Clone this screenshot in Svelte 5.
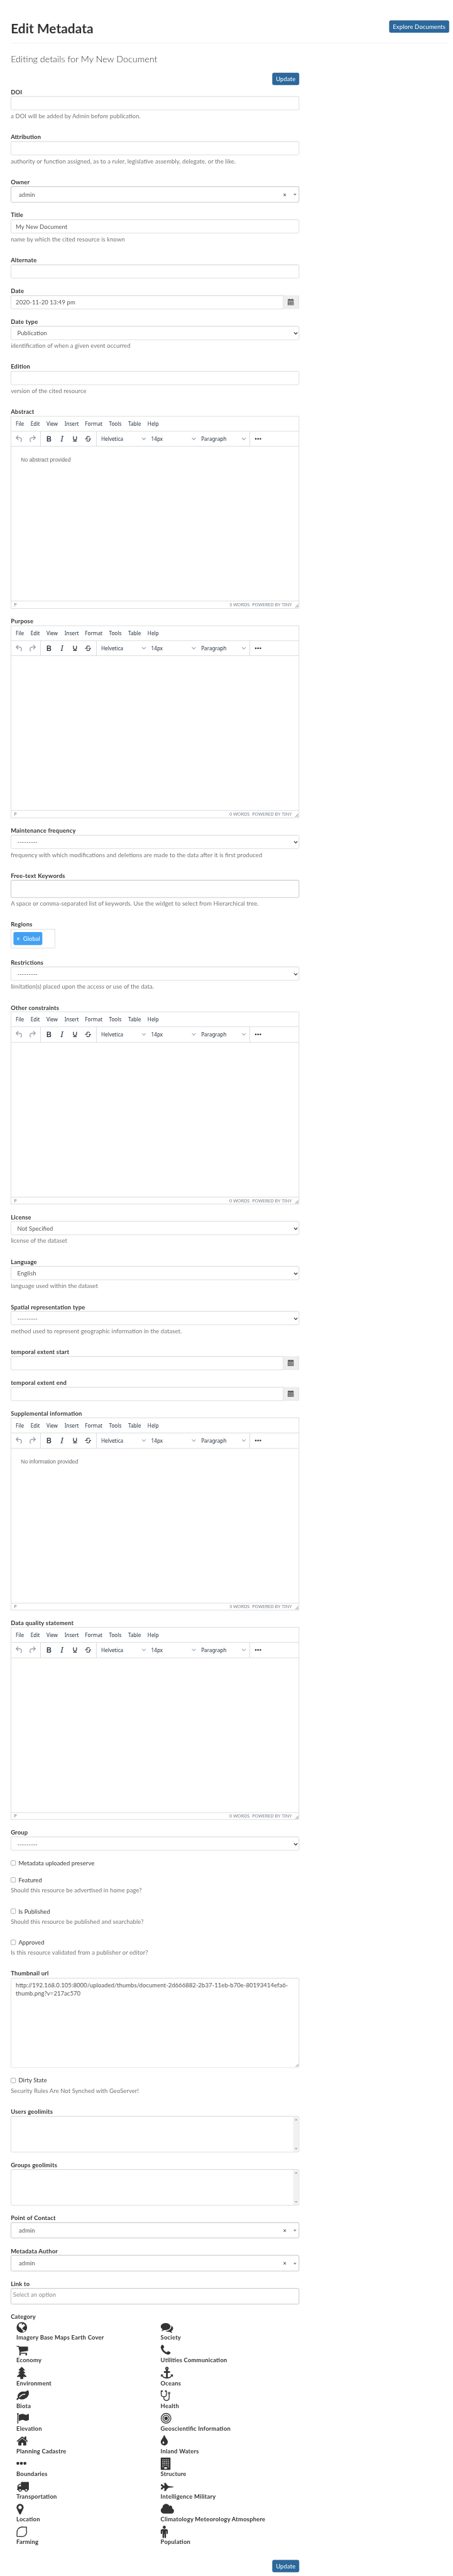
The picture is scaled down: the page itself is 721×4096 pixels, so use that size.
<script>
  const menus = [
    ['File', 38.8], ['Edit', 41.4], ['View', 47], ['Insert', 53],
    ['Format', 62.3], ['Tools', 50], ['Table', 50.4], ['Help', 40]
  ];

  const fields = [
    { label: 'DOI', kind: 'text', help: 'a DOI will be added by Admin before publication.' },
    { label: 'Attribution', kind: 'text', help: 'authority or function assigned, as to a ruler, legislative assembly, delegate, or the like.' },
    { label: 'Owner', kind: 'picker', value: 'admin' },
    { label: 'Title', kind: 'text', value: 'My New Document', help: 'name by which the cited resource is known' },
    { label: 'Alternate', kind: 'text' },
    { label: 'Date', kind: 'date', value: '2020-11-20 13:49 pm' },
    { label: 'Date type', kind: 'select', value: 'Publication', help: 'identification of when a given event occurred' },
    { label: 'Edition', kind: 'text', help: 'version of the cited resource' },
    { label: 'Abstract', kind: 'editor', value: 'No abstract provided', words: 3 },
    { label: 'Purpose', kind: 'editor', words: 0 },
    { label: 'Maintenance frequency', kind: 'select', value: '---------', help: 'frequency with which modifications and deletions are made to the data after it is first produced' },
    { label: 'Free-text Keywords', kind: 'keywords', help: 'A space or comma-separated list of keywords. Use the widget to select from Hierarchical tree.' },
    { label: 'Regions', kind: 'regions', value: 'Global' },
    { label: 'Restrictions', kind: 'select', value: '---------', help: 'limitation(s) placed upon the access or use of the data.' },
    { label: 'Other constraints', kind: 'editor', words: 0 },
    { label: 'License', kind: 'select', value: 'Not Specified', help: 'license of the dataset' },
    { label: 'Language', kind: 'select', value: 'English', help: 'language used within the dataset' },
    { label: 'Spatial representation type', kind: 'select', value: '---------', help: 'method used to represent geographic information in the dataset.' },
    { label: 'temporal extent start', kind: 'date' },
    { label: 'temporal extent end', kind: 'date' },
    { label: 'Supplemental information', kind: 'editor', value: 'No information provided', words: 3 },
    { label: 'Data quality statement', kind: 'editor', words: 0 },
    { label: 'Group', kind: 'select', value: '---------' },
    { label: 'Metadata uploaded preserve', kind: 'check' },
    { label: 'Featured', kind: 'check', help: 'Should this resource be advertised in home page?' },
    { label: 'Is Published', kind: 'check', help: 'Should this resource be published and searchable?' },
    { label: 'Approved', kind: 'check', help: 'Is this resource validated from a publisher or editor?' },
    { label: 'Thumbnail url', kind: 'area', value: 'http://192.168.0.105:8000/uploaded/thumbs/document-2d666882-2b37-11eb-b70e-80193414efa6-thumb.png?v=217ac570' },
    { label: 'Dirty State', kind: 'check', help: 'Security Rules Are Not Synched with GeoServer!' },
    { label: 'Users geolimits', kind: 'list' },
    { label: 'Groups geolimits', kind: 'list' },
    { label: 'Point of Contact', kind: 'picker', value: 'admin' },
    { label: 'Metadata Author', kind: 'picker', value: 'admin' },
    { label: 'Link to', kind: 'link', value: 'Select an option' }
  ];

  const styleIcons = [
    'M7.8 19c-.3 0-.5 0-.6-.2l-.2-.5V5.7c0-.2 0-.4.2-.5l.6-.2h5c1.5 0 2.7.3 3.5 1 .7.6 1.1 1.4 1.1 2.5a3 3 0 01-.6 1.9c-.4.6-1 1-1.6 1.2.4.1.9.3 1.3.6s.8.7 1 1.2c.4.4.5 1 .5 1.6 0 1.3-.4 2.3-1.3 3-.8.7-2.1 1-3.8 1H7.8zm5-8.3c.6 0 1.2-.1 1.6-.5.4-.3.6-.7.6-1.3 0-1.1-.8-1.7-2.3-1.7H9.3v3.5h3.4zm.5 6c.7 0 1.3-.1 1.7-.4.4-.4.6-.9.6-1.5s-.2-1-.7-1.4c-.4-.3-1-.4-2-.4H9.4v3.8h4z',
    'M16.7 4.7l-.1.9h-.3c-.6 0-1 0-1.4.3-.3.3-.4.6-.5 1.1l-2.1 9.8v.6c0 .5.4.8 1.4.8h.2l-.2.8H8l.2-.8h.2c1.1 0 1.8-.5 2-1.5l2-9.8.1-.5c0-.6-.4-.8-1.4-.8h-.3l.2-.9h5.8z',
    'M16 5c.6 0 1 .4 1 1v5.5a4 4 0 01-.4 1.8l-1 1.4a5.3 5.3 0 01-5.5 1 5 5 0 01-1.6-1c-.5-.4-.8-.9-1.1-1.4a4 4 0 01-.4-1.8V6c0-.6.4-1 1-1s1 .4 1 1v5.5c0 .3 0 .6.2 1l.6.7a3.3 3.3 0 002.2.8 3.4 3.4 0 002.2-.8c.3-.2.4-.5.6-.8l.2-.9V6c0-.6.4-1 1-1zM8 17h8c.6 0 1 .4 1 1s-.4 1-1 1H8a1 1 0 010-2z',
    'M15.6 8.5c-.5-.7-1-1.1-1.3-1.3-.6-.4-1.3-.6-2-.6-2.7 0-2.8 1.7-2.8 2.1 0 1.6 1.8 2 3.2 2.3 4.4.9 4.6 2.8 4.6 3.9 0 1.4-.7 4.1-5 4.1A6.2 6.2 0 017 16.4l1.5-1.1c.4.6 1.6 2 3.7 2 1.6 0 2.5-.4 3-1.2.4-.8.3-2-.8-2.6-.7-.4-1.6-.7-2.9-1-1-.2-3.9-.8-3.9-3.6C7.6 6 10.3 5 12.4 5c2.9 0 4.2 1.6 4.7 2.4l-1.5 1.1zM5 11h14a1 1 0 010 2H5a1 1 0 010-2z'
  ];

  // Each icon: left edge and width on a 1792-unit grid, filled path, optional stroked path.
  const categories = [
    { name: 'Imagery Base Maps Earth Cover', x: 128, w: 1536, d: 'M896 128a768 768 0 1 1 0 1536a768 768 0 1 1 0-1536zM410 610L470 440L620 330L880 280L960 310L860 380L900 480L1010 500L1090 400L1220 420L1380 640L1290 720L1170 760L1120 880L1000 960L940 1060L990 1120L1060 1100L1110 1230L1280 1250L1390 1370L1230 1500L1040 1540L1000 1490L1060 1380L1050 1260L900 1180L800 1080L740 960L600 900L500 780z' },
    { name: 'Society', x: 0, w: 1792, d: 'M1408 768q0 139-94 257t-256.5 186.5-353.5 68.5q-86 0-176-16-124 88-278 128-36 9-86 16h-3q-11 0-20.5-8t-11.5-21q-1-3-1-6.5t.5-6.5 2-6l2.5-5 3.5-5.5 4-5 4.5-5 4-4.5q5-6 23-25t26-29.5 22.5-29 25-38.5 20.5-44q-124-72-195-177t-71-224q0-139 94-257t256.5-186.5 353.5-68.5 353.5 68.5 256.5 186.5 94 257zm384 256q0 120-71 224.5t-195 176.5q10 24 20.5 44t25 38.5 22.5 29 26 29.5 23 25q1 1 4 4.5t4.5 5 4 5 3.5 5.5l2.5 5 2 6 .5 6.5-1 6.5q-3 14-13 22t-22 7q-50-7-86-16-154-40-278-128-90 16-176 16-271 0-472-132 58 4 88 4 161 0 309-45t264-129q125-92 192-212t67-254q0-77-23-152 129 71 204 178t75 230z' },
    { name: 'Economy', x: 64, w: 1664, d: 'M704 1536q0 52-38 90t-90 38-90-38-38-90 38-90 90-38 90 38 38 90zm896 0q0 52-38 90t-90 38-90-38-38-90 38-90 90-38 90 38 38 90zm128-1088v512q0 24-16.5 42.5t-40.5 21.5l-1044 122q13 60 13 70 0 16-24 64h920q26 0 45 19t19 45-19 45-45 19h-1024q-26 0-45-19t-19-45q0-11 8-31.5t16-36 21.5-40 15.5-29.5l-177-823h-204q-26 0-45-19t-19-45 19-45 45-19h256q16 0 28.5 6.5t19.5 15.5 13 24.5 8 26 5.5 29.5 4.5 26h1201q26 0 45 19t19 45z' },
    { name: 'Utilities Communication', x: 192, w: 1408, d: 'M1600 1240q0 27-10 70.5t-21 68.5q-21 50-122 106-94 51-186 51-27 0-53-3.5t-57.5-12.5-47-14.5-55.5-20.5-49-18q-98-35-175-83-127-79-264-216t-216-264q-48-77-83-175-3-9-18-49t-20.5-55.5-14.5-47-12.5-57.5-3.5-53q0-92 51-186 56-101 106-122 25-11 68.5-21t70.5-10q14 0 21 3 18 6 53 76 11 19 30 54t35 63.5 31 53.5q3 4 17.5 25t21.5 35.5 7 28.5q0 20-28.5 50t-62 55-62 53-28.5 46q0 9 5 22.5t8.5 20.5 14 24 11.5 19q76 137 174 235t235 174q2 1 19 11.5t24 14 20.5 8.5 22.5 5q18 0 46-28.5t53-62 55-62 50-28.5q14 0 28.5 7t35.5 21.5 25 17.5q25 15 53.5 31t63.5 35 54 30q70 35 76 53 3 7 3 21z' },
    { name: 'Environment', x: 140, w: 1510, d: 'M895 30q26 0 45 19l384 384q19 19 19 45t-19 45-45 19h-190l285 301q19 19 19 45t-19 45-45 19h-190l430 429q19 19 19 45t-19 45-45 19h-420v238q0 26-19 45t-45 19h-290q-26 0-45-19t-19-45v-238h-420q-26 0-45-19t-19-45 19-45l430-429h-190q-26 0-45-19t-19-45 19-45l285-301h-190q-26 0-45-19t-19-45 19-45l384-384q19-19 45-19z' },
    { name: 'Oceans', x: 0, w: 1792, d: 'M896 0a256 256 0 0 1 128 476v164h256a64 64 0 0 1 64 64v128a64 64 0 0 1-64 64h-256v647q170-22 304-90t204-170l-110-110q-15-15-10-35 9-20 30-20h290q32 0 32 32v290q0 20-20 30-20 5-35-10l-80-80q-95 150-290 240t-443 92q-250-2-446-92t-287-240l-80 80q-15 15-35 10-20-10-20-30v-290q0-32 32-32h290q21 0 30 20 5 20-10 35l-110 110q70 102 204 170t304 90v-647h-256a64 64 0 0 1-64-64v-128a64 64 0 0 1 64-64h256v-164a256 256 0 0 1 128-476zM896 170a72 72 0 1 0 0 144a72 72 0 1 0 0-144z' },
    { name: 'Biota', x: 0, w: 1792, d: 'M1280 704q0-26-19-45t-45-19q-172 0-318 49.5t-259.5 134-235.5 219.5q-19 21-19 45 0 26 19 45t45 19q24 0 45-19 27-24 74-71t67-66q137-124 268.5-176t313.5-52q26 0 45-19t19-45zm512-198q0 95-20 193-46 224-184.5 383t-357.5 268q-214 108-438 108-148 0-286-47-15-5-88-42t-96-37q-16 0-39.5 32t-45 70-52.5 70-60 32q-43 0-63.5-17.5t-45.5-59.5q-2-4-6-11t-5.5-10-3-9.5-1.5-13.5q0-35 31-73.5t68-65.5 68-56 31-48q0-4-14-38t-16-44q-9-51-9-104 0-115 43.5-220t119-184.5 170.5-139 204-95.5q55-18 145-25.5t179.5-9 178.5-6 163.5-24 113.5-56.5l29.5-29.5 29.5-28 27-20 36.5-16 43.5-4.5q39 0 70.5 46t47.5 112 24 124 8 96z' },
    { name: 'Health', x: 192, w: 1408, d: 'M1408 350a176 176 0 1 1 0 352a176 176 0 1 1 0-352zM1408 462a64 64 0 1 0 0 128a64 64 0 1 0 0-128zM384 128a110 110 0 1 1 0 220a110 110 0 1 1 0-220zM896 128a110 110 0 1 1 0 220a110 110 0 1 1 0-220z', s: 'M400 240H256V700C256 1180 1024 1180 1024 700V240H880M640 1060V1240C640 1700 1408 1700 1408 1240V680' },
    { name: 'Elevation', x: 0, w: 1792, d: 'M320 256q0 72-64 110v1266q0 13-9.5 22.5t-22.5 9.5h-64q-13 0-22.5-9.5t-9.5-22.5v-1266q-64-38-64-110 0-53 37.5-90.5t90.5-37.5 90.5 37.5 37.5 90.5zm1472 64v763q0 25-12.5 38.5t-39.5 27.5q-215 116-369 116-61 0-123.5-22t-108.5-48-115.5-48-142.5-22q-192 0-464 146-17 9-33 9-26 0-45-19t-19-45v-742q0-32 31-55 21-14 79-43 236-120 421-120 107 0 200 29t219 88q38 19 88 19 54 0 117.5-21t110-47 88-47 54.5-21q26 0 45 19t19 45z' },
    { name: 'Geoscientific Information', x: 128, w: 1536, d: 'M896 640a256 256 0 1 1 0 512a256 256 0 1 1 0-512z', s: 'M896 448a448 448 0 1 1 0 896a448 448 0 1 1 0-896zM896 192a704 704 0 1 1 0 1408a704 704 0 1 1 0-1408z' },
    { name: 'Planning Cadastre', x: 64, w: 1664, d: 'M1472 992v480q0 26-19 45t-45 19h-384v-384h-256v384h-384q-26 0-45-19t-19-45v-480q0-1 .5-3t.5-3l575-474 575 474q1 2 1 6zm223-69l-62 74q-8 9-21 11h-3q-13 0-21-7l-692-577-692 577q-12 8-24 7-13-2-21-11l-62-74q-8-10-7-23.5t11-21.5l719-599q32-26 76-26t76 26l244 204v-195q0-14 9-23t23-9h192q14 0 23 9t9 23v408l219 182q10 8 11 21.5t-7 23.5z' },
    { name: 'Inland Waters', x: 384, w: 1024, d: 'M896 1152q0-36-20-69-1-1-15.5-22.5t-25.5-38-25-44-21-50.5q-4-16-21-16t-21 16q-7 23-21 50.5t-25 44-25.5 38-15.5 22.5q-20 33-20 69 0 53 37.5 90.5t90.5 37.5 90.5-37.5 37.5-90.5zm512-128q0 212-150 362t-362 150-362-150-150-362q0-145 81-275 6-9 62.5-90.5t101-151 99.5-178 83-201.5q9-30 34-47t51-17 51.5 17 33.5 47q28 93 83 201.5t99.5 178 101 151 62.5 90.5q81 127 81 275z' },
    { name: 'Boundaries', x: 192, w: 1408, d: 'M288 640h192a96 96 0 0 1 96 96v192a96 96 0 0 1-96 96h-192a96 96 0 0 1-96-96v-192a96 96 0 0 1 96-96zM800 640h192a96 96 0 0 1 96 96v192a96 96 0 0 1-96 96h-192a96 96 0 0 1-96-96v-192a96 96 0 0 1 96-96zM1312 640h192a96 96 0 0 1 96 96v192a96 96 0 0 1-96 96h-192a96 96 0 0 1-96-96v-192a96 96 0 0 1 96-96z' },
    { name: 'Structure', x: 192, w: 1408, d: 'M256 0h1280q64 0 64 64v1664q0 64-64 64h-1280q-64 0-64-64v-1664q0-64 64-64z' + [256, 512, 768, 1024, 1280].flatMap((y) => [448, 704, 960, 1216].map((x) => (y === 1280 && x > 448 && x < 1216 ? '' : `M${x} ${y}v128h128v-128z`))).join('') + 'M704 1408v224h384v-224z' },
    { name: 'Transportation', x: 0, w: 1792, d: 'M640 1408q0-52-38-90t-90-38-90 38-38 90 38 90 90 38 90-38 38-90zm-384-512h384v-256h-158q-13 0-22 9l-195 195q-9 9-9 22v30zm1280 512q0-52-38-90t-90-38-90 38-38 90 38 90 90 38 90-38 38-90zm256-1088v1024q0 15-4 26.5t-13.5 18.5-16.5 11.5-23.5 6-22.5 2-25.5 0-22.5-.5q0 106-75 181t-181 75-181-75-75-181h-384q0 106-75 181t-181 75-181-75-75-181h-64q-3 0-22.5.5t-25.5 0-22.5-2-23.5-6-16.5-11.5-13.5-18.5-4-26.5q0-26 19-45t45-19v-320q0-8-.5-35t0-38 2.5-34.5 6.5-37 14-30.5 22.5-30l198-198q19-19 50.5-32t58.5-13h160v-192q0-26 19-45t45-19h1024q26 0 45 19t19 45z' },
    { name: 'Intelligence Military', x: 0, w: 1920, d: 'M1920 960q-40 50-340 80l-300 24-180 28-80 60-310 340h90q40 4 40 24t-40 24h-380v-48h110v-370h-120l-210 230h-120l-50-16v-250h48v-32l130-14v-160l-130-14v-32h-48v-250l50-16h120l210 230h120v-370h-110v-48h380q40 4 40 24t-40 24h-90l310 340 80 60 180 28 300 24q300 30 340 80z' },
    { name: 'Location', x: 384, w: 1024, d: 'M1152 640q0-106-75-181t-181-75-181 75-75 181 75 181 181 75 181-75 75-181zm256 0q0 109-33 179l-364 774q-16 33-47.5 52t-67.5 19-67.5-19-46.5-52l-365-774q-33-70-33-179 0-212 150-362t362-150 362 150 150 362z' },
    { name: 'Climatology Meteorology Atmosphere', x: 64, w: 1920, d: 'M1984 1152q0 159-112.5 271.5t-271.5 112.5h-1088q-185 0-316.5-131.5t-131.5-316.5q0-132 71-241.5t187-163.5q-2-28-2-43 0-212 150-362t362-150q158 0 286.5 88t187.5 230q70-62 166-62 106 0 181 75t75 181q0 75-41 138 129 30 213 134.5t84 239.5z' },
    { name: 'Farming', x: 128, w: 1536, s: 'M1528 205C1440 170 1380 250 1230 215C900 140 560 240 340 490C170 690 180 880 195 1080C205 1240 175 1420 205 1540C235 1630 330 1570 440 1565C600 1560 780 1610 960 1585C1240 1545 1480 1360 1570 1090C1620 910 1590 760 1560 620C1540 500 1600 380 1590 280C1580 235 1560 215 1528 205Z' },
    { name: 'Population', x: 384, w: 1024, d: 'M896 0a224 224 0 1 1 0 448a224 224 0 1 1 0-448zM576 512h640q80 0 136 56t56 136v416a96 96 0 0 1-192 0v-352h-64v912a112 112 0 0 1-224 0v-464h-64v464a112 112 0 0 1-224 0v-912h-64v352a96 96 0 0 1-192 0v-416q0-80 56-136t136-56z' }
  ];
</script>

{#snippet chevron()}
  <svg class="chev" viewBox="0 0 12 8" width="12" height="8"><path d="M1.2 1.2L6 6.2l4.8-5" /></svg>
{/snippet}

{#snippet editor(f)}
  <div class="editor">
    <div class="menubar">
      {#each menus as [name, width]}<span style="width:{width}px">{name}</span>{/each}
    </div>
    <div class="toolbar">
      <div class="group muted">
        <svg viewBox="0 0 24 24"><path d="M6.4 8H12c3.7 0 6.2 2 6.8 5.1.6 2.7-.4 5.6-2.3 6.8a1 1 0 01-1-1.8c1.1-.6 1.8-2.7 1.4-4.6-.5-2.1-2.1-3.5-4.9-3.5H6.4l3.3 3.3a1 1 0 11-1.4 1.4l-5-5a1 1 0 010-1.4l5-5a1 1 0 011.4 1.4L6.4 8z" /></svg>
        <svg viewBox="0 0 24 24"><path d="M17.6 10H12c-2.8 0-4.4 1.4-4.9 3.5-.4 2 .3 4 1.4 4.6a1 1 0 11-1 1.8c-2-1.2-2.9-4.1-2.3-6.8.6-3 3-5.1 6.8-5.1h5.6l-3.3-3.3a1 1 0 111.4-1.4l5 5a1 1 0 010 1.4l-5 5a1 1 0 01-1.4-1.4l3.3-3.3z" /></svg>
      </div>
      <div class="group">
        {#each styleIcons as d}<svg viewBox="0 0 24 24"><path {d} fill-rule="evenodd" /></svg>{/each}
      </div>
      <div class="group">
        {#each ['Helvetica', '14px', 'Paragraph'] as choice}
          <div class="choice"><span>{choice}</span>{@render chevron()}</div>
        {/each}
      </div>
      <div class="group last">
        <svg viewBox="0 0 24 24"><circle cx="6" cy="12" r="2.1" /><circle cx="12" cy="12" r="2.1" /><circle cx="18" cy="12" r="2.1" /></svg>
      </div>
    </div>
    <div class="content">{f.value ?? ''}</div>
    <div class="status">
      <span class="path">P</span>
      <span class="words">{f.words} WORDS</span>
      <span class="brand">POWERED BY TINY</span>
      <svg class="grip" viewBox="0 0 10 10" width="10" height="10"><path d="M1 9.3L8.8 1.2M5.4 9.3L8.8 5.8" /></svg>
    </div>
  </div>
{/snippet}

<div class="window">
  <div class="page">
    <header>
      <h2>Edit Metadata</h2>
      <button class="btn">Explore Documents</button>
    </header>
    <h3>Editing details for My New Document</h3>

    <form>
      <div class="actions"><button type="button" class="btn">Update</button></div>

      {#each fields as f}
        <div class="field is-{f.kind}">
          {#if f.kind === 'check'}
            <div class="checkline"><i></i><span>{f.label}</span></div>
          {:else}
            <div class="label">{f.label}</div>
          {/if}

          {#if f.kind === 'text'}
            <div class="control">{f.value ?? ''}</div>
          {:else if f.kind === 'date'}
            <div class="dategroup">
              <div class="control">{f.value ?? ''}</div>
              <div class="addon">
                <svg viewBox="0 0 16 17" width="16" height="17">
                  <path fill-rule="evenodd" d="M1 1.5h2V0h2.500v1.500h5V0H13v1.500h2a1 1 0 0 1 1 1V5H0V2.500a1 1 0 0 1 1-1zM0 6h16v10a1 1 0 0 1-1 1H1a1 1 0 0 1-1-1zM2 7.500v1.800h2V7.500zM5.300 7.500v1.800h2V7.500zM8.700 7.500v1.800h2V7.500zM12 7.500v1.800h2V7.500zM2 10.600v1.800h2v-1.800zM5.300 10.600v1.800h2v-1.800zM8.700 10.600v1.800h2v-1.800zM12 10.600v1.800h2v-1.800zM2 13.600v1.800h2v-1.800zM5.300 13.600v1.800h2v-1.800zM8.700 13.600v1.800h2v-1.800zM12 13.600v1.800h2v-1.800z" />
                </svg>
              </div>
            </div>
          {:else if f.kind === 'select'}
            <div class="control dropdown">
              <span>{f.value}</span>
              <svg viewBox="0 0 12 8" width="12" height="8"><path d="M1.600 1.400L6 5.800l4.400-4.400" /></svg>
            </div>
          {:else if f.kind === 'picker'}
            <div class="control tall picker">
              <span class="chosen">{f.value}</span><b>×</b><i class="caret"></i>
            </div>
          {:else if f.kind === 'link'}
            <div class="control tall placeholder">{f.value}</div>
          {:else if f.kind === 'keywords'}
            <div class="control tall keys"></div>
          {:else if f.kind === 'regions'}
            <div class="regionbox"><span class="tag"><em>×</em>{f.value}</span></div>
          {:else if f.kind === 'area'}
            <div class="control areabox">
              {f.value}
              <svg class="grip" viewBox="0 0 10 10" width="10" height="10"><path d="M1.500 9L9 1.500M5.500 9L9 5.500" /></svg>
            </div>
          {:else if f.kind === 'list'}
            <div class="control listbox"><div class="scroll"><i class="up"></i><i class="down"></i></div></div>
          {:else if f.kind === 'editor'}
            {@render editor(f)}
          {/if}

          {#if f.help}<p>{f.help}</p>{/if}
        </div>
      {/each}

      <div class="label">Category</div>
      <div class="categories">
        {#each categories as c}
          <div class="category">
            <svg viewBox="{c.x} 0 {c.w} 1792" style="width:{c.w / 55.76}px">
              {#if c.d}<path d={c.d} fill-rule="evenodd" />{/if}
              {#if c.s}<path class="line" d={c.s} />{/if}
            </svg>
            <span>{c.name}</span>
          </div>
        {/each}
      </div>
      <div class="actions bottom"><button type="button" class="btn">Update</button></div>
    </form>
  </div>
</div>

<style>
  :global(body) { background: #fff; }
  .window { width: 721px; height: 4096px; overflow: hidden; }
  .page {
    box-sizing: border-box;
    width: 1178px;
    height: 6691px;
    padding: 53px 10px 0 28px;
    transform: scale(0.6121);
    transform-origin: 0 0;
    font: 15.4px/21.5px Lato, "Open Sans", sans-serif;
    font-feature-settings: "liga" 1;
    letter-spacing: 0.16px;
    color: #333;
  }
  .page :global(*) { box-sizing: border-box; }
  header {
    display: flex;
    justify-content: space-between;
    align-items: flex-start;
    height: 59px;
    border-bottom: 1px solid #eaeaea;
  }
  h2 { margin: 0; font-size: 34px; line-height: 40px; font-weight: 700; letter-spacing: 0.1px; }
  h3 { margin: 24px 0 0; height: 53px; font-size: 23.5px; line-height: 34px; font-weight: 300; letter-spacing: 0; }
  .btn {
    height: 32px;
    padding: 0 8.500px;
    border: 1px solid #265a87;
    border-radius: 4px;
    background: #2c689c;
    color: #fff;
    font: 15.4px/28px Lato, sans-serif;
    letter-spacing: 0.26px;
    white-space: nowrap;
  }
  form { width: 750px; }
  .actions { display: flex; justify-content: flex-end; height: 39.5px; }
  .bottom { margin-top: 30.500px; }
  .label { height: 21.5px; font-weight: 700; letter-spacing: 0.33px; }
  .field { margin-bottom: 22.5px; }
  .is-regions { margin-bottom: 26.9px; }
  p { margin: 5.4px 0 0; height: 31.6px; color: #737373; white-space: nowrap; }
  .control {
    height: 36px;
    padding: 7.5px 12px 0;
    border: 1px solid #c8c8c8;
    border-radius: 4px;
    box-shadow: inset 0 1px 1px rgba(0, 0, 0, 0.075);
    background: #fff;
    color: #555;
  }
  .dategroup { display: flex; }
  .dategroup .control { flex: 1; border-radius: 4px 0 0 4px; }
  .addon {
    display: flex;
    justify-content: center;
    width: 41px;
    padding: 8px 2px 0 0;
    border: 1px solid #c8c8c8;
    border-left: 0;
    border-radius: 0 4px 4px 0;
    background: #eee;
  }
  .addon svg { fill: #555; }
  .dropdown { display: flex; justify-content: space-between; padding: 7.5px 2px 0 16px; }
  .dropdown svg { margin-top: 7px; fill: none; stroke: #444; stroke-width: 2.2; }
  .tall { height: 41.8px; border-color: #a6a6a6; }
  .picker { display: flex; align-items: center; padding: 2px 6px 0 20px; }
  .chosen { flex: 1; }
  .picker b { width: 9px; margin-right: 18px; text-align: center; }
  .caret { border: solid transparent; border-width: 5px 4px 0; border-top-color: #888; }
  .placeholder { padding: 4.500px 5px 0; color: #888; }
  .keys { height: 46px; }
  .regionbox { width: 114.5px; height: 50px; padding: 7px 6px; border: 1px solid #ccc; }
  .tag {
    display: inline-flex;
    align-items: center;
    height: 34px;
    padding: 2px 6px 0 8px;
    border-radius: 4px;
    background: #43a1f3;
    color: #fff;
  }
  .tag em { width: 17px; font-style: normal; }
  .areabox { position: relative; height: 234px; overflow-wrap: break-word; padding-right: 4px; }
  .grip { fill: none; stroke: #555; stroke-width: 1.1; }
  .areabox .grip { position: absolute; right: 0; bottom: 1px; }
  .listbox { display: flex; justify-content: flex-end; height: 93.8px; padding: 0; overflow: hidden; }
  .scroll {
    display: flex;
    flex-direction: column;
    justify-content: space-between;
    align-items: center;
    width: 15px;
    padding: 6px 0;
    background: #f1f1f1;
  }
  .up, .down { border: solid transparent; border-width: 0 4px 4px; border-bottom-color: #a3a3a3; }
  .down { border-width: 4px 4px 0; border-top-color: #a3a3a3; }
  .checkline { display: flex; height: 21.5px; }
  .checkline i { width: 13px; height: 13px; margin: 3.5px 7px 0 0; border: 1px solid #767676; border-radius: 2.5px; }

  .editor {
    display: flex;
    flex-direction: column;
    height: 500px;
    border: 1px solid #c8c8c8;
    color: #222f3e;
    font: 13.4px/20px "Noto Sans", "Open Sans", sans-serif;
    letter-spacing: 0;
  }
  .menubar { display: flex; height: 39px; padding: 9px 0 0 11.8px; border-bottom: 1px solid #c8c8c8; }
  .toolbar { display: flex; height: 39.500px; border-bottom: 1px solid #c8c8c8; }
  .group { display: flex; align-items: center; padding: 0 4px; border-right: 1px solid #c8c8c8; }
  .group.last { border: 0; }
  .group > svg { width: 24px; height: 24px; margin: 0 5px; fill: #222f3e; }
  .group.muted > svg { fill: #9096a0; }
  .choice { display: flex; align-items: center; justify-content: space-between; width: 130px; padding: 0 5.5px 0 8px; }
  .chev { fill: none; stroke: #90979f; stroke-width: 1.700; }
  .content { flex: 1; padding: 24px 25.500px; color: #666; font: 14px/20px "Liberation Sans", Arial, sans-serif; }
  .status {
    display: flex;
    height: 18.500px;
    padding-left: 7.500px;
    border-top: 1px solid #c8c8c8;
    font-size: 11.8px;
    line-height: 17.5px;
    color: #707a85;
    white-space: nowrap;
  }
  .path { flex: 1; color: #557594; }
  .words { width: 59px; }
  .brand { width: 111.500px; }
  .status .grip { width: 10px; margin: 7px 0 0; stroke-width: 1.3; }

  .categories { display: grid; grid-template-columns: 375px 1fr; grid-auto-rows: 59px; padding-left: 14.500px; }
  .category { display: flex; flex-direction: column; font-weight: 700; letter-spacing: 0.36px; white-space: nowrap; }
  .category svg { height: 32.14px; flex: none; fill: #333; overflow: visible; }
  .category .line { fill: none; stroke: #333; stroke-width: 124; }
</style>
